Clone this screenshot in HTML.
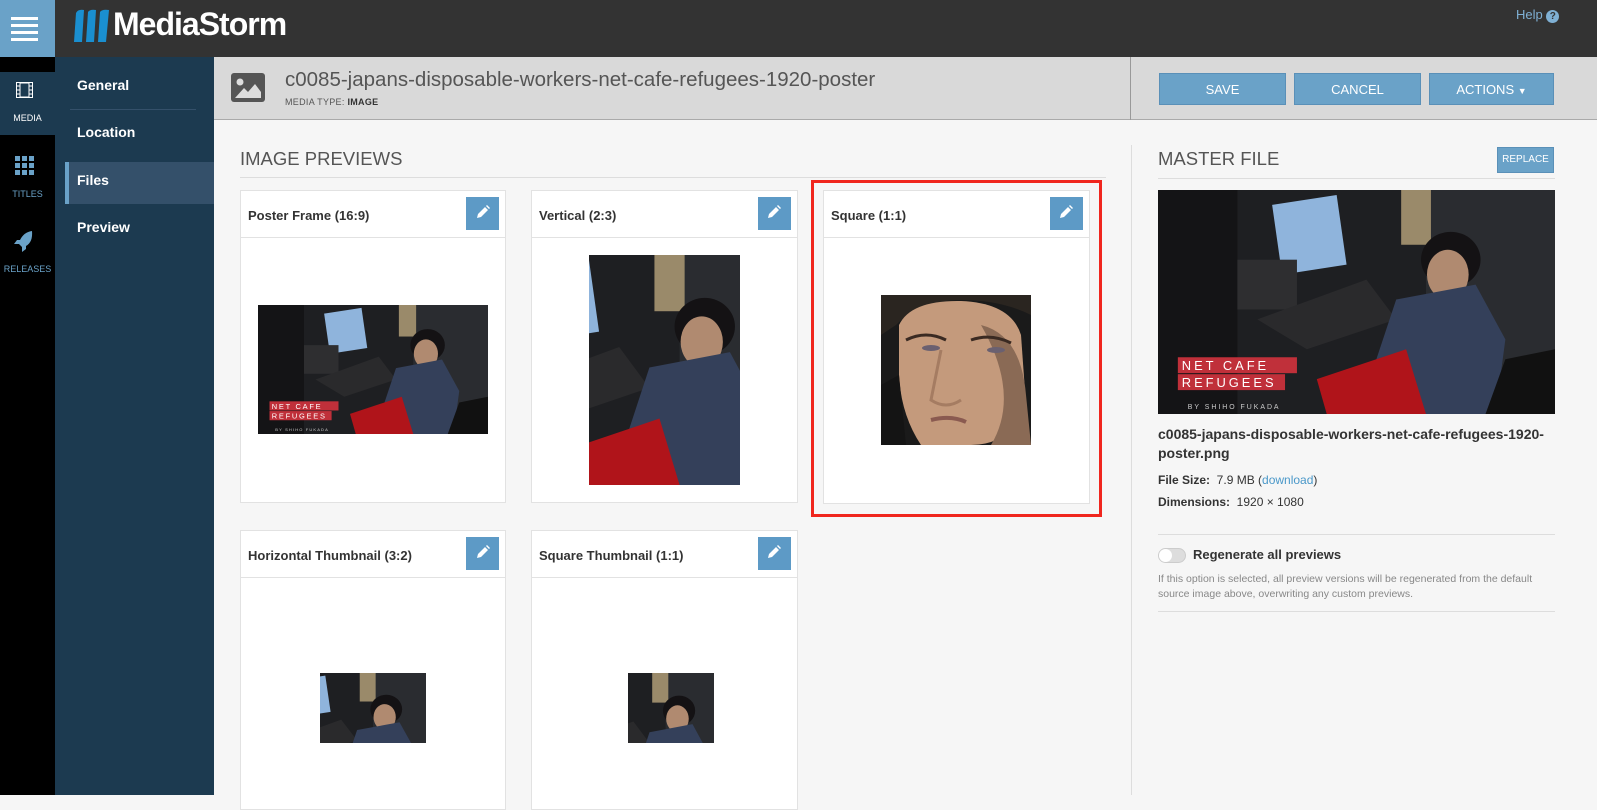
<!DOCTYPE html>
<html><head><meta charset="utf-8"><style>
*{box-sizing:border-box;margin:0;padding:0}
body{width:1597px;height:795px;overflow:hidden;background:#f6f6f6;font-family:"Liberation Sans",sans-serif;position:relative;color:#333}
.a{position:absolute}
.top{left:0;top:0;width:1597px;height:57px;background:#333}
.burger{left:0;top:0;width:55px;height:57px;background:#6aa2c8}
.burger i{position:absolute;left:11px;width:27px;height:3px;background:#fff}
.side1{left:0;top:57px;width:55px;height:738px;background:#000}
.side2{left:55px;top:57px;width:159px;height:738px;background:#1c3a50}
.nav{position:absolute;left:77px;color:#fff;font-weight:bold;font-size:14px}
.sic{position:absolute;width:55px;text-align:center;font-size:9px;color:#6aa2c8}
.hdr{left:214px;top:57px;width:1383px;height:63px;background:#d9d9d9;border-bottom:1px solid #aaa}
.btn{position:absolute;background:#6aa2c8;color:#fff;font-size:13px;text-align:center;line-height:31px;height:32px;border:1px solid #5a90b8}
.card{position:absolute;background:#fff;border:1px solid #e2e2e2}
.card .h{height:47px;border-bottom:1px solid #e2e2e2;font-size:13px;font-weight:bold;padding:17px 0 0 7px;color:#333}
.ed{position:absolute;right:6px;top:6px;width:33px;height:33px;background:#5d9ac6}
.ph{position:absolute;overflow:hidden}
</style></head><body>
<div class="a top"></div>
<div class="a burger"><i style="top:17px"></i><i style="top:24px"></i><i style="top:31px"></i><i style="top:38px"></i></div>
<svg class="a" style="left:72px;top:9px" width="40" height="34" viewBox="0 0 40 34"><path d="M4 4 Q6 0 12 1 L10 33 L2 33 Z" fill="#1a8fd0"/><path d="M16 3 Q18 0 24 1 L22 33 L14 33 Z" fill="#1a8fd0"/><path d="M28 3 Q30 0 37 1 L34 33 L26 33 Z" fill="#1a8fd0"/></svg>
<div class="a" style="left:113px;top:6px;font-size:32px;font-weight:bold;color:#fff;letter-spacing:-1px">MediaStorm</div>
<div class="a" style="left:1516px;top:7px;font-size:13px;color:#7fb0d4">Help <span style="display:inline-block;width:13px;height:13px;border-radius:50%;background:#7fb0d4;color:#333;font-size:10px;text-align:center;line-height:13px;font-weight:bold">?</span></div>

<div class="a side1"></div>
<div class="a" style="left:0;top:72px;width:55px;height:63px;background:#1c3a50"></div>
<svg class="a" style="left:16px;top:82px" width="17" height="16" viewBox="0 0 17 16"><rect x="0.5" y="0.5" width="16" height="15" fill="none" stroke="#fff"/><rect x="4" y="1" width="9" height="14" fill="none" stroke="#fff"/><path d="M1 4h3M1 8h3M1 12h3M13 4h3M13 8h3M13 12h3" stroke="#fff"/></svg>
<div class="sic" style="top:113px;left:0;color:#fff">MEDIA</div>
<svg class="a" style="left:15px;top:156px" width="19" height="19"><g fill="#6aa2c8"><rect x="0" y="0" width="5" height="5"/><rect x="7" y="0" width="5" height="5"/><rect x="14" y="0" width="5" height="5"/><rect x="0" y="7" width="5" height="5"/><rect x="7" y="7" width="5" height="5"/><rect x="14" y="7" width="5" height="5"/><rect x="0" y="14" width="5" height="5"/><rect x="7" y="14" width="5" height="5"/><rect x="14" y="14" width="5" height="5"/></g></svg>
<div class="sic" style="top:189px;left:0">TITLES</div>
<svg class="a" style="left:14px;top:230px" width="20" height="22" viewBox="0 0 20 22"><path d="M18 1 Q10 2 6 10 L3 10 L0 14 L5 14 L8 17 L8 22 L12 19 L12 16 Q19 12 18 1Z" fill="#6aa2c8"/></svg>
<div class="sic" style="top:264px;left:0">RELEASES</div>

<div class="a side2"></div>
<div class="nav" style="top:77px">General</div>
<div class="a" style="left:70px;top:109px;width:126px;height:1px;background:#34506a"></div>
<div class="nav" style="top:124px">Location</div>
<div class="a" style="left:65px;top:162px;width:149px;height:42px;background:#34506a;border-left:4px solid #6aa2c8"></div>
<div class="nav" style="top:172px">Files</div>
<div class="nav" style="top:219px">Preview</div>

<div class="a hdr"></div>
<svg class="a" style="left:231px;top:73px" width="34" height="29" viewBox="0 0 34 29"><rect width="34" height="29" rx="3" fill="#555"/><circle cx="9" cy="9" r="3.5" fill="#ddd"/><path d="M4 25 L13 15 L17 19 L24 11 L30 19 L30 25 Z" fill="#ddd"/></svg>
<div class="a" style="left:285px;top:68px;font-size:20.5px;color:#555">c0085-japans-disposable-workers-net-cafe-refugees-1920-poster</div>
<div class="a" style="left:285px;top:97px;font-size:9px;color:#555;letter-spacing:.3px">MEDIA TYPE: <b style="color:#333">IMAGE</b></div>
<div class="a" style="left:1130px;top:57px;width:1px;height:63px;background:#999"></div>
<div class="btn" style="left:1159px;top:73px;width:127px">SAVE</div>
<div class="btn" style="left:1294px;top:73px;width:127px">CANCEL</div>
<div class="btn" style="left:1429px;top:73px;width:125px">ACTIONS <span style="font-size:9px">▼</span></div>

<div class="a" style="left:240px;top:148px;font-size:18.5px;color:#555">IMAGE PREVIEWS</div>
<div class="a" style="left:240px;top:177px;width:866px;height:1px;background:#ddd"></div>

<div class="a" style="left:811px;top:180px;width:291px;height:337px;border:3px solid #f0261e"></div>

<div class="card" style="left:240px;top:190px;width:266px;height:313px"><div class="h">Poster Frame (16:9)</div><div class="ed"></div></div>
<div class="card" style="left:531px;top:190px;width:267px;height:313px"><div class="h">Vertical (2:3)</div><div class="ed"></div></div>
<div class="card" style="left:823px;top:190px;width:267px;height:314px"><div class="h">Square (1:1)</div><div class="ed"></div></div>
<div class="card" style="left:240px;top:530px;width:266px;height:280px"><div class="h">Horizontal Thumbnail (3:2)</div><div class="ed"></div></div>
<div class="card" style="left:531px;top:530px;width:267px;height:280px"><div class="h">Square Thumbnail (1:1)</div><div class="ed"></div></div>

<svg width="0" height="0" style="position:absolute"><defs><g id="pen"><path d="M3 14 L4 10 L11 3 L14 6 L7 13 Z M12 2 L13 1 L16 4 L15 5Z" fill="#fff"/></g></defs></svg>
<svg class="a" style="left:474px;top:204px" width="17" height="17"><use href="#pen"/></svg>
<svg class="a" style="left:765px;top:204px" width="17" height="17"><use href="#pen"/></svg>
<svg class="a" style="left:1057px;top:204px" width="17" height="17"><use href="#pen"/></svg>
<svg class="a" style="left:474px;top:544px" width="17" height="17"><use href="#pen"/></svg>
<svg class="a" style="left:765px;top:544px" width="17" height="17"><use href="#pen"/></svg>

<svg width="0" height="0" style="position:absolute"><defs>
<g id="scene">
<rect width="400" height="225" fill="#1e1f22"/>
<rect x="0" y="0" width="80" height="225" fill="#141416"/>
<rect x="270" y="0" width="130" height="225" fill="#2a2c30"/>
<path d="M115 15 L180 5 L190 75 L125 85Z" fill="#8fb4dc"/>
<rect x="245" y="0" width="30" height="55" fill="#9a8a6a"/>
<rect x="80" y="70" width="60" height="50" fill="#2e2e30"/>
<path d="M100 130 L210 90 L240 130 L150 160Z" fill="#2a2a2c"/>
<ellipse cx="295" cy="70" rx="30" ry="28" fill="#141214"/>
<ellipse cx="292" cy="85" rx="21" ry="25" fill="#b08a70"/>
<path d="M240 110 L320 95 L350 150 L340 225 L240 225 L220 170Z" fill="#34405a"/>
<path d="M160 190 L250 160 L270 225 L170 225Z" fill="#b0141a"/>
<path d="M350 170 L400 160 L400 225 L330 225Z" fill="#111"/>
<rect x="20" y="168" width="120" height="16" fill="#c0303a"/>
<rect x="20" y="185" width="108" height="16" fill="#c0303a"/>
<text x="24" y="181" font-family="Liberation Sans" font-size="13" fill="#fff" letter-spacing="3">NET CAFE</text>
<text x="24" y="198" font-family="Liberation Sans" font-size="13" fill="#fff" letter-spacing="3">REFUGEES</text>
<text x="30" y="220" font-family="Liberation Sans" font-size="7" fill="#ccc" letter-spacing="2">BY  SHIHO FUKADA</text>
</g></defs></svg>

<svg class="ph" style="left:258px;top:305px" width="230" height="129" viewBox="0 0 400 225" preserveAspectRatio="none"><use href="#scene"/></svg>
<svg class="ph" style="left:1158px;top:190px" width="397" height="224" viewBox="0 0 400 225" preserveAspectRatio="none"><use href="#scene"/></svg>
<svg class="ph" style="left:589px;top:255px" width="151" height="230" viewBox="180 0 150 225" preserveAspectRatio="none"><use href="#scene"/></svg>
<svg class="ph" style="left:320px;top:673px" width="106" height="70" viewBox="170 0 200 135" preserveAspectRatio="none"><use href="#scene"/></svg>
<svg class="ph" style="left:628px;top:673px" width="86" height="70" viewBox="200 0 160 130" preserveAspectRatio="none"><use href="#scene"/></svg>
<svg class="ph" style="left:881px;top:295px" width="150" height="150" viewBox="0 0 150 150">
<rect width="150" height="150" fill="#1a1a1a"/>
<path d="M0 0 H150 V20 Q120 5 80 5 Q40 5 15 30 L0 40Z" fill="#2a2520"/>
<path d="M18 30 Q30 5 80 6 Q130 8 140 40 L145 110 Q130 150 90 150 L40 150 Q20 120 18 80Z" fill="#c49a7c"/>
<path d="M100 30 Q140 40 145 100 L150 150 H110 Q140 100 100 30Z" fill="#8a6a55"/>
<path d="M25 45 Q45 35 65 45" stroke="#3a2a22" stroke-width="3" fill="none"/>
<path d="M90 45 Q110 38 130 48" stroke="#3a2a22" stroke-width="3" fill="none"/>
<ellipse cx="50" cy="53" rx="9" ry="3" fill="#6a6070"/>
<ellipse cx="115" cy="55" rx="9" ry="3" fill="#6a6070"/>
<path d="M60 55 L50 105 Q65 115 80 105" stroke="#a57c62" stroke-width="3" fill="none"/>
<path d="M50 125 Q70 120 85 127" stroke="#8a5a50" stroke-width="4" fill="none"/>
<path d="M0 90 L18 80 L25 150 H0Z" fill="#141414"/>
</svg>

<div class="a" style="left:1131px;top:145px;width:1px;height:650px;background:#ddd"></div>
<div class="a" style="left:1158px;top:148px;font-size:18.5px;color:#555">MASTER FILE</div>
<div class="btn" style="left:1497px;top:147px;width:57px;height:26px;line-height:24px;font-size:10px">REPLACE</div>
<div class="a" style="left:1158px;top:178px;width:397px;height:1px;background:#ddd"></div>
<div class="a" style="left:1158px;top:425px;width:400px;font-size:14px;font-weight:bold;line-height:19px;color:#333">c0085-japans-disposable-workers-net-cafe-refugees-1920-poster.png</div>
<div class="a" style="left:1158px;top:473px;font-size:12px;color:#333"><b>File Size:</b>&nbsp; 7.9 MB (<span style="color:#4a98c9">download</span>)</div>
<div class="a" style="left:1158px;top:495px;font-size:12px;color:#333"><b>Dimensions:</b>&nbsp; 1920 × 1080</div>
<div class="a" style="left:1158px;top:534px;width:397px;height:1px;background:#ddd"></div>
<div class="a" style="left:1158px;top:548px;width:28px;height:15px;border-radius:8px;background:#ddd;border:1px solid #ccc"><div style="width:13px;height:13px;border-radius:50%;background:#fff"></div></div>
<div class="a" style="left:1193px;top:547px;font-size:13px;font-weight:bold;color:#333">Regenerate all previews</div>
<div class="a" style="left:1158px;top:572px;width:385px;font-size:10.5px;color:#888;line-height:15px">If this option is selected, all preview versions will be regenerated from the default source image above, overwriting any custom previews.</div>
<div class="a" style="left:1158px;top:611px;width:397px;height:1px;background:#ddd"></div>
</body></html>
